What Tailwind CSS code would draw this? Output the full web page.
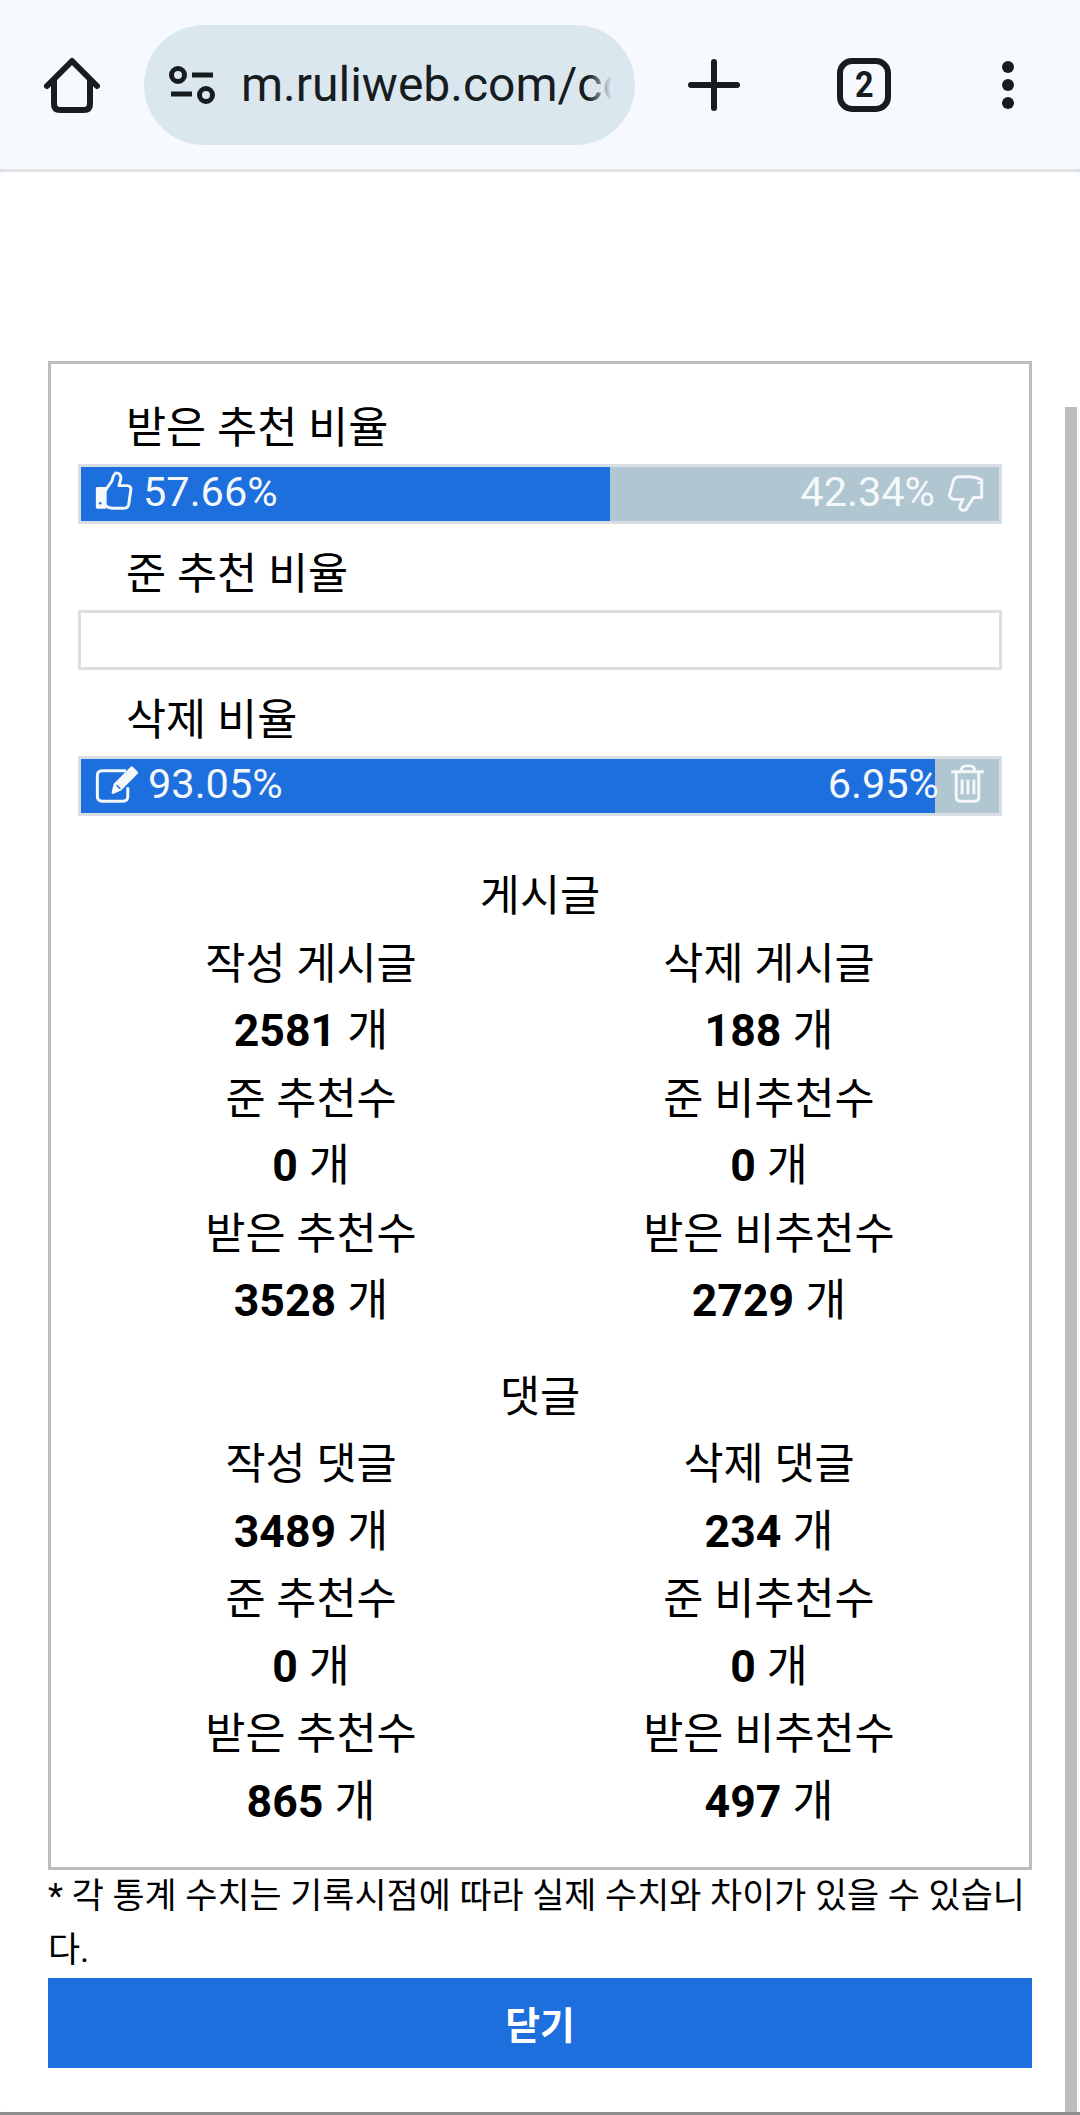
<!DOCTYPE html>
<html lang="ko">
<head>
    <meta charset="UTF-8">
    <meta name="viewport" content="width=device-width, initial-scale=1.0">
    <title>활동 통계</title>
    <script src="https://cdn.jsdelivr.net/npm/@tailwindcss/browser@4"></script>
</head>
<body class="bg-[#f6f9fe] font-['Roboto','Noto_Sans_CJK_KR',sans-serif] text-black">
    <div class="relative w-[1080px] h-[2115px] overflow-hidden">
        <!-- 브라우저 주소창 -->
        <div class="flex items-center h-[169px] bg-[#f6f9fe] text-[#171c1f]">
            <div class="w-[144px] flex justify-center">
                <svg width="60" height="62" viewBox="0 0 60 62" fill="none" stroke="#171c1f" stroke-width="6" stroke-linecap="round" stroke-linejoin="round">
                    <path d="M5 32 L30 7 L55 32"/>
                    <path d="M12 27 V50 Q12 56 18 56 H42 Q48 56 48 50 V27"/>
                </svg>
            </div>
            <div class="relative flex items-center w-[491px] h-[120px] rounded-full bg-[#dae7ef] overflow-hidden">
                <svg class="absolute left-[24px] top-[38px]" width="52" height="42" viewBox="0 0 52 42" fill="none" stroke="#171c1f" stroke-width="5">
                    <circle cx="10" cy="12" r="6.5"/>
                    <path d="M24 12 H45"/>
                    <path d="M3 31 H24"/>
                    <circle cx="38" cy="32" r="6.5"/>
                </svg>
                <div class="absolute left-[97px] w-[371px] overflow-hidden whitespace-nowrap text-[48px] leading-[60px]">m.ruliweb.com/co</div>
                <div class="absolute left-[444px] w-[24px] h-full bg-linear-to-r from-transparent to-[#dae7ef]"></div>
            </div>
            <div class="w-[158px] flex justify-center">
                <svg width="54" height="54" viewBox="0 0 54 54" fill="none" stroke="#171c1f" stroke-width="6" stroke-linecap="round">
                    <path d="M27 4 V50"/>
                    <path d="M4 27 H50"/>
                </svg>
            </div>
            <div class="w-[142px] flex justify-center">
                <div class="flex items-center justify-center w-[54px] h-[54px] rounded-[15px] border-[6px] border-[#171c1f] font-bold leading-none">
                    <span class="text-[36px] scale-x-90">2</span>
                </div>
            </div>
            <div class="w-[145px] flex flex-col items-center gap-[6px]">
                <span class="w-[12px] h-[12px] rounded-full bg-[#171c1f]"></span>
                <span class="w-[12px] h-[12px] rounded-full bg-[#171c1f]"></span>
                <span class="w-[12px] h-[12px] rounded-full bg-[#171c1f]"></span>
            </div>
        </div>

        <!-- 바텀시트 -->
        <div class="h-[3px] bg-[#dfe3e6]"></div>
        <div class="relative h-[1940px] bg-white rounded-[6px] px-[48px] pt-[189px]">
            <div class="w-[984px] h-[1509px] border-[3px] border-[#bdbdbd] px-[27px]">
                <!-- 비율 -->
                <div class="flex items-end h-[100px] pl-[48px] pb-[5px] text-[43.6px] leading-[60px]">받은 추천 비율</div>
                <div class="relative flex h-[60px] border-[3px] border-[#d8dee3] bg-[#b0c6d0]">
                    <div class="w-[57.66%] bg-[#1c6fdc]"></div>
                    <div class="absolute inset-0 flex items-center justify-between px-[4px] pb-[3px] text-[41.5px] text-[#f4f8fb]">
                        <div class="flex items-center">
                            <svg class="-mr-[2px]" width="60" height="54" viewBox="0 0 60 55" fill="none" stroke="currentColor" stroke-width="3" stroke-linejoin="round" stroke-linecap="round">
                                <path d="M12 23 H20 V42 H12 Z" fill="currentColor"/>
                                <path d="M20 25 L27 15 Q28 9 31 7 Q36 7 36 13 L34 20 H43 Q47 21 46 25 L44 39 Q43 43 39 43 H28 Q23 43 20 40"/>
                                <circle cx="15" cy="38" r="1.3" fill="#1c6fdc" stroke="none"/>
                            </svg>
                            <span>57.66%</span>
                        </div>
                        <div class="flex items-center">
                            <span>42.34%</span>
                            <svg width="60" height="54" viewBox="0 0 60 55" fill="none" stroke="currentColor" stroke-width="3" stroke-linejoin="round" stroke-linecap="round">
                                <path d="M47 14 V32 H39 L33 41 Q31 46 28 45 Q24 45 25 40 L28 34 H20 Q15 34 14 30 L18 16 Q19 11 24 11 H35 Q41 11 47 14 Z"/>
                                <circle cx="44" cy="17" r="1.3" fill="currentColor" stroke="none"/>
                            </svg>
                        </div>
                    </div>
                </div>
                <div class="flex items-end h-[86px] pl-[48px] pb-[5px] text-[43.6px] leading-[60px]">준 추천 비율</div>
                <div class="h-[60px] border-[3px] border-[#dedede] bg-white"></div>
                <div class="flex items-end h-[86px] pl-[48px] pb-[5px] text-[43.6px] leading-[60px]">삭제 비율</div>
                <div class="relative flex h-[60px] border-[3px] border-[#d8dee3] bg-[#b0c6d0]">
                    <div class="w-[93.05%] bg-[#1c6fdc]"></div>
                    <div class="absolute inset-0 flex items-center justify-between px-[4px] pb-[3px] text-[41.5px] text-[#f4f8fb]">
                        <div class="flex items-center">
                            <svg class="-mr-[2px]" width="65" height="54" viewBox="0 0 65 55" fill="none" stroke="currentColor" stroke-width="3" stroke-linejoin="round" stroke-linecap="round">
                                <path d="M40 13 H17 Q12 13 12 18 V39 Q12 44 17 44 H38 Q43 44 43 39 V31"/>
                                <path d="M47 10 L52 15 L35 32 L28 35 L30 27 Z" fill="currentColor"/>
                                <path d="M32 28 L35 31" stroke="#1c6fdc" stroke-width="1.5"/>
                            </svg>
                            <span>93.05%</span>
                        </div>
                        <div class="flex items-center">
                            <span>6.95%</span>
                            <svg width="56" height="54" viewBox="4 0 56 55" fill="none" stroke="currentColor" stroke-width="3" stroke-linejoin="round">
                                <path d="M16 14 H49"/>
                                <path d="M26 14 Q26 8 31 8 H35 Q40 8 40 14"/>
                                <path d="M21 15 V40 Q21 44 25 44 H40 Q44 44 44 40 V15"/>
                                <path d="M27 22 V37 M33 22 V37 M39 22 V37"/>
                            </svg>
                        </div>
                    </div>
                </div>

                <!-- 게시글 -->
                <div class="mt-[47px] text-center text-[43.6px] leading-[67.5px]">
                    <div>게시글</div>
                    <div class="grid grid-cols-2 px-[4px]">
                        <div>작성 게시글</div><div>삭제 게시글</div>
                        <div class="text-[44.6px]"><b>2581</b> 개</div><div class="text-[44.6px]"><b>188</b> 개</div>
                        <div>준 추천수</div><div>준 비추천수</div>
                        <div class="text-[44.6px]"><b>0</b> 개</div><div class="text-[44.6px]"><b>0</b> 개</div>
                        <div>받은 추천수</div><div>받은 비추천수</div>
                        <div class="text-[44.6px]"><b>3528</b> 개</div><div class="text-[44.6px]"><b>2729</b> 개</div>
                    </div>
                </div>

                <!-- 댓글 -->
                <div class="mt-[28px] text-center text-[43.6px] leading-[67.5px]">
                    <div>댓글</div>
                    <div class="grid grid-cols-2 px-[4px]">
                        <div>작성 댓글</div><div>삭제 댓글</div>
                        <div class="text-[44.6px]"><b>3489</b> 개</div><div class="text-[44.6px]"><b>234</b> 개</div>
                        <div>준 추천수</div><div>준 비추천수</div>
                        <div class="text-[44.6px]"><b>0</b> 개</div><div class="text-[44.6px]"><b>0</b> 개</div>
                        <div>받은 추천수</div><div>받은 비추천수</div>
                        <div class="text-[44.6px]"><b>865</b> 개</div><div class="text-[44.6px]"><b>497</b> 개</div>
                    </div>
                </div>
            </div>
            <p class="w-[984px] text-[34.9px] leading-[54px] break-all">* 각 통계 수치는 기록시점에 따라 실제 수치와 차이가 있을 수 있습니다.</p>
            <div class="flex items-center justify-center w-[984px] h-[90px] pt-[6px] bg-[#1c6fdc] text-white text-[37.8px] font-bold">닫기</div>
            <div class="absolute left-[1065px] top-[235px] bottom-0 w-[12px] bg-[#bdbdbd]"></div>
        </div>
        <div class="h-[3px] bg-[#8f8f8f]"></div>
    </div>
</body>
</html>
